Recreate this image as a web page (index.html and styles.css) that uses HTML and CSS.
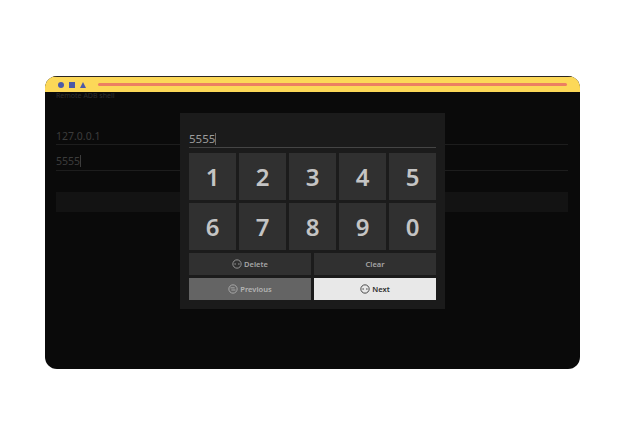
FILE: index.html
```html
<!DOCTYPE html>
<html lang="en">
<head>
    <meta charset="UTF-8">
    <title>Remote ADB shell</title>
    <link rel="stylesheet" href="styles.css">
</head>
<body>
    <div class="window">
        <div class="titlebar">
            <span class="dot"></span>
            <span class="square"></span>
            <span class="triangle"></span>
            <span class="address"></span>
        </div>
        <div class="screen">
            <div class="heading">Remote ADB shell</div>
            <div class="field first">127.0.0.1</div>
            <div class="field second">5555<span class="caret"></span></div>
            <div class="connect"></div>

            <div class="dialog">
                <div class="input">5555<span class="caret"></span></div>
                <div class="keys">
                    <div class="key">1</div>
                    <div class="key">2</div>
                    <div class="key">3</div>
                    <div class="key">4</div>
                    <div class="key">5</div>
                    <div class="key">6</div>
                    <div class="key">7</div>
                    <div class="key">8</div>
                    <div class="key">9</div>
                    <div class="key">0</div>
                </div>
                <div class="actions">
                    <div class="action">
                        <svg class="icon" viewBox="0 0 12 12"><circle cx="6" cy="6" r="5"/><path d="M2.8 6h2M7.2 6h2"/></svg>
                        Delete
                    </div>
                    <div class="action">Clear</div>
                    <div class="action previous">
                        <svg class="icon" viewBox="0 0 12 12"><circle cx="6" cy="6" r="5"/><path d="M3 4.6h5M4 7.2h5"/></svg>
                        Previous
                    </div>
                    <div class="action next">
                        <svg class="icon" viewBox="0 0 12 12"><circle cx="6" cy="6" r="5"/><path d="M2.8 6h2M7.2 6h2"/></svg>
                        Next
                    </div>
                </div>
            </div>
        </div>
    </div>
</body>
</html>
```

FILE: styles.css
```css
html, body {
    margin: 0;
    height: 100%;
    background-color: #ffffff;
}
body {
    padding: 76px 45px 76px 45px;
    box-sizing: border-box;
    font-family: "Noto Sans", "Open Sans", sans-serif;
}
.window {
    width: 535px;
    height: 293px;
    border-radius: 12px;
    overflow: hidden;
    background-color: #0a0a0a;
    display: flex;
    flex-direction: column;
}
.titlebar {
    height: 16px;
    flex: none;
    box-sizing: border-box;
    border-top: 1px solid #2b2620;
    background-color: #fcd858;
    display: flex;
    align-items: center;
    padding: 0 13px 0 13px;
}
.dot {
    width: 6px;
    height: 6px;
    border-radius: 50%;
    background-color: #4d5aa8;
    margin-right: 5px;
}
.square {
    width: 6px;
    height: 6px;
    background-color: #4d5aa8;
    margin-right: 5px;
}
.triangle {
    width: 0;
    height: 0;
    border-left: 3px solid transparent;
    border-right: 3px solid transparent;
    border-bottom: 6px solid #4d5aa8;
    margin-right: 12px;
}
.address {
    flex: 1;
    height: 3px;
    border-radius: 2px;
    background-color: #ec7f62;
}
.screen {
    position: relative;
    flex: 1;
    padding: 0 12px 0 11px;
    overflow: hidden;
}
.heading {
    height: 7px;
    font-size: 7px;
    line-height: 7px;
    color: #2e2e2e;
}
.field {
    box-sizing: border-box;
    border-bottom: 1px solid #1d1d1d;
    font-size: 10.5px;
    color: #3c3c3c;
}
.first {
    margin-top: 30px;
    height: 16px;
    line-height: 15px;
}
.second {
    height: 26px;
    line-height: 33px;
}
.caret {
    display: inline-block;
    width: 1px;
    height: 12px;
    vertical-align: -2px;
    background-color: currentColor;
}
.connect {
    height: 20px;
    margin-top: 21px;
    background-color: #131313;
}
.dialog {
    position: absolute;
    left: 135px;
    top: 21px;
    width: 265px;
    height: 196px;
    box-sizing: border-box;
    padding: 0 9px;
    background-color: #1b1b1b;
    display: flex;
    flex-direction: column;
}
.input {
    height: 35px;
    box-sizing: border-box;
    padding-top: 17px;
    border-bottom: 1px solid #454545;
    font-size: 11.5px;
    line-height: 18px;
    color: #9c9c9c;
}
.input .caret {
    background-color: #6a6a6a;
}
.keys {
    margin-top: 5px;
    display: grid;
    grid-template-columns: repeat(5, 47px);
    grid-auto-rows: 47px;
    gap: 3px;
}
.key {
    background-color: #303030;
    color: #c4c4c4;
    font-size: 24px;
    font-weight: 600;
    display: flex;
    align-items: center;
    justify-content: center;
}
.actions {
    margin-top: 3px;
    display: grid;
    grid-template-columns: 122px 122px;
    grid-auto-rows: 22px;
    gap: 3px;
}
.action {
    background-color: #303030;
    color: #a6a6a6;
    font-size: 7.5px;
    font-weight: 600;
    display: flex;
    align-items: center;
    justify-content: center;
    gap: 2px;
}
.previous {
    background-color: #646464;
    color: #b4b4b4;
}
.next {
    background-color: #e8e8e8;
    color: #2c2c2c;
}
.icon {
    width: 10px;
    height: 10px;
    fill: none;
    stroke: currentColor;
    stroke-width: 1;
}
```
